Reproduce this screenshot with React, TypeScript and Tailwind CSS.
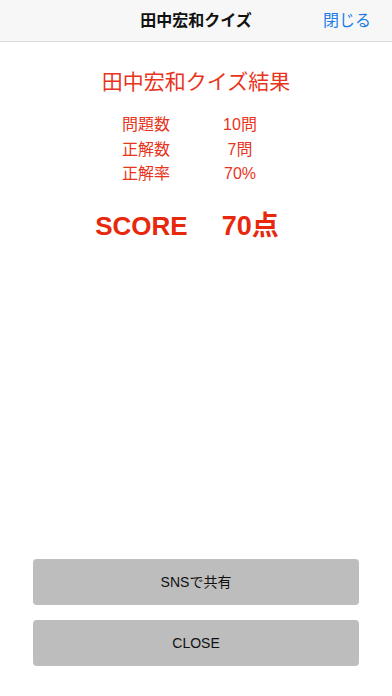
export default function App() {
  const rows = [
    { label: "問題数", value: "10問" },
    { label: "正解数", value: "7問" },
    { label: "正解率", value: "70%" },
  ];

  return (
    <div
      className="flex h-[696px] w-[392px] flex-col bg-white"
      style={{ fontFamily: '"Liberation Sans", "Noto Sans CJK JP", sans-serif' }}
    >
      {/* nav bar */}
      <div className="grid h-[42px] shrink-0 grid-cols-[1fr_auto_1fr] items-center border-b border-[#dcdcdc] bg-[#f7f7f7]">
        <div />
        <div className="text-[16px] font-semibold text-[#111]">田中宏和クイズ</div>
        <div className="flex justify-end pr-[21px]">
          <button className="text-[16px] text-[#1c7ce6]">閉じる</button>
        </div>
      </div>

      {/* result */}
      <div className="mt-[26px] text-center text-[21px] leading-[28px] text-[#e8341c]">田中宏和クイズ結果</div>

      <div className="mt-[17px] flex justify-center">
        <div className="grid w-[148px] grid-cols-[70px_60px] gap-x-[18px] text-[16px] leading-[24.5px] text-[#e8341c]">
          {rows.map((r) => (
            <div key={r.label} className="contents">
              <span>{r.label}</span>
              <span className="text-center">{r.value}</span>
            </div>
          ))}
        </div>
      </div>

      <div className="mt-[23px] flex justify-center gap-[34px] pr-[18px] text-[26px] font-bold leading-[32px] text-[#e8280c]">
        <span>SCORE</span>
        <span className="text-[27px]">70点</span>
      </div>

      {/* buttons */}
      <div className="mt-auto flex flex-col gap-[15px] px-[33px] pb-[30px]">
        <button className="h-[46px] rounded-[4px] bg-[#bdbdbd] text-[14px] text-[#111]">SNSで共有</button>
        <button className="h-[46px] rounded-[4px] bg-[#bdbdbd] text-[14px] text-[#111]">CLOSE</button>
      </div>
    </div>
  );
}
